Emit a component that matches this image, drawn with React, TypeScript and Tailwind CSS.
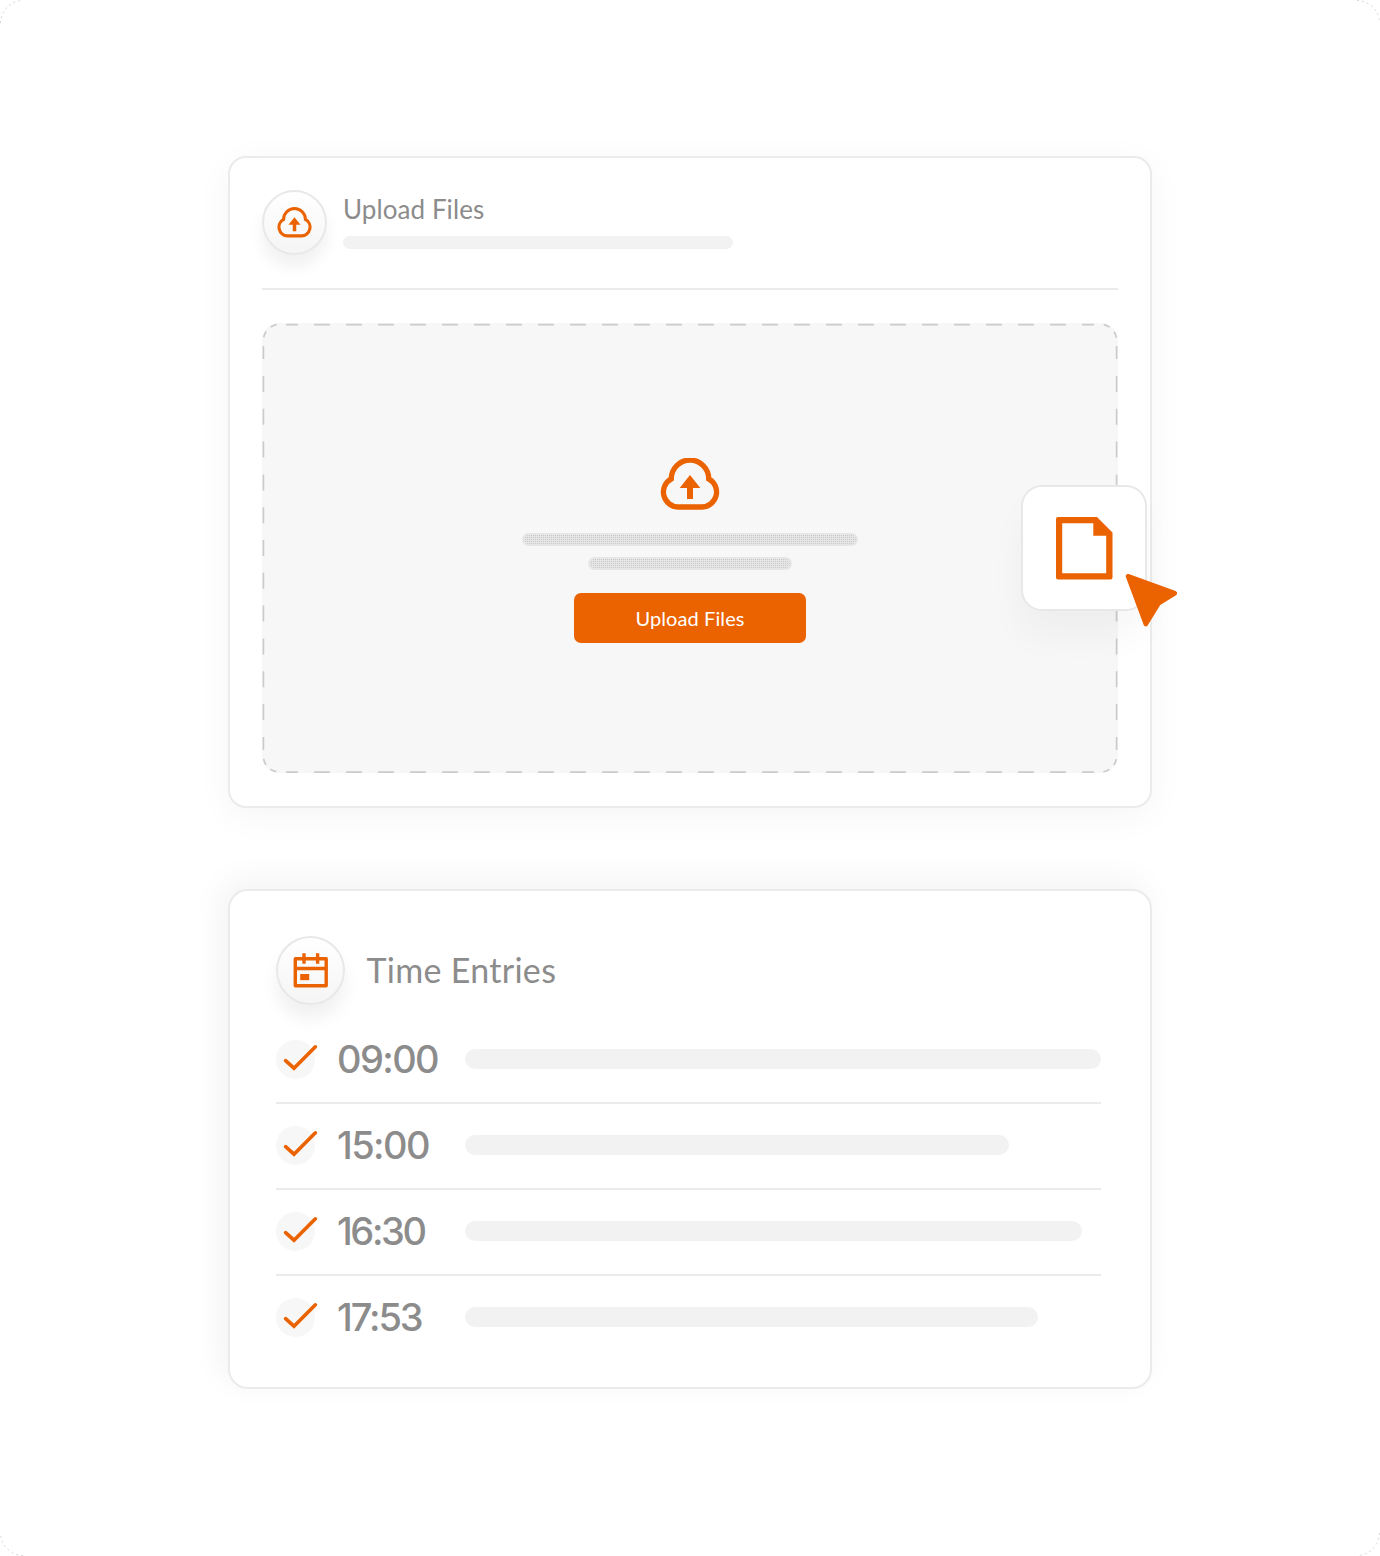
import React from "react";

const ORANGE = "#eb6200";

function CloudUpload({ className }: { className: string }) {
  return (
    <svg viewBox="0 0 60 52" className={className} fill="none">
      <path
        d="M18 49A15 15 0 0 1 11.3 20.8A18.7 18.7 0 0 1 48.7 20.8A15 15 0 0 1 42 49Z"
        stroke={ORANGE}
        strokeWidth="5.3"
      />
      <path d="M30 17L40.3 30H33V41H27V30H19.7Z" fill={ORANGE} />
    </svg>
  );
}

function CalendarIcon() {
  return (
    <svg viewBox="0 0 36 36" className="size-9" fill="none">
      <path d="M2.3 5.8H33.2V32.7H2.3Z" stroke={ORANGE} strokeWidth="3.4" strokeLinejoin="round" />
      <path d="M2 15.5H33M11 .2V10.8M24.6 .2V10.8" stroke={ORANGE} strokeWidth="3.4" />
      <path d="M7.2 21H16.2V27.2H7.2Z" fill={ORANGE} />
    </svg>
  );
}

function FileIcon() {
  return (
    <svg viewBox="0 0 57 63" className="h-[63px] w-[57px]">
      <path
        fillRule="evenodd"
        fill={ORANGE}
        d="M2 0H41L56.5 15.6V60.5Q56.5 62.5 54.5 62.5H2Q0 62.5 0 60.5V2Q0 0 2 0ZM6.2 6.2V56.2H50.2V18.8H37.3V6.2Z"
      />
    </svg>
  );
}

function CornerMark({ className }: { className: string }) {
  return (
    <svg viewBox="0 0 24 24" className={`absolute size-6 ${className}`} fill="none">
      <path d="M.5 23A23 23 0 0 1 23 .5" stroke="#d6d6d6" strokeWidth="1" strokeDasharray="2 3" />
    </svg>
  );
}

function DropZoneOutline() {
  const arc = { strokeDasharray: "0 3.2 6.3 6.3 6.3 4" };
  return (
    <svg viewBox="0 0 856 450" className="absolute inset-0 h-[450px] w-[856px]" fill="none" stroke="#cbcbcb" strokeWidth="1.7">
      {[1.6, 449.1].map((y) => (
        <g key={y}>
          <path d={`M52 ${y}H804`} strokeDasharray="16 16" />
          <path d={`M24 ${y}H36M820 ${y}H832`} />
        </g>
      ))}
      {[1.4, 854.6].map((x) => (
        <g key={x}>
          <path d={`M${x} 53V397`} strokeDasharray="16 16.8" />
          <path d={`M${x} 23V36M${x} 414V427`} />
        </g>
      ))}
      <path d="M1.4 17.4A16 16 0 0 1 17.4 1.4" {...arc} />
      <path d="M838.6 1.4A16 16 0 0 1 854.6 17.4" {...arc} />
      <path d="M854.6 433A16 16 0 0 1 838.6 449" {...arc} />
      <path d="M17.4 449A16 16 0 0 1 1.4 433" {...arc} />
    </svg>
  );
}

const entries = [
  { time: "09:00", bar: "w-[636px]", tracking: "tracking-[-1.6px]" },
  { time: "15:00", bar: "w-[543.5px]", tracking: "tracking-[-1.6px]" },
  { time: "16:30", bar: "w-[616.5px]", tracking: "tracking-[-2.4px]" },
  { time: "17:53", bar: "w-[573px]", tracking: "tracking-[-2.1px]" },
];

function UploadCard() {
  return (
    <section className="relative h-[652px] w-[924px] rounded-[18px] border-2 border-[#ebebeb] bg-white px-8 pt-8 shadow-[0_8px_36px_rgba(0,0,0,0.045)]">
      <header className="flex h-[100px] border-b-2 border-[#ebebeb]">
        <div className="flex size-[65px] items-center justify-center rounded-full border-2 border-[#e8e8e8] bg-linear-to-b from-white to-[#f5f5f5] pb-[1px] shadow-[0_12px_16px_rgba(0,0,0,0.06)]">
          <CloudUpload className="h-[31px] w-[35px]" />
        </div>
        <div className="ml-4 pt-[3px]">
          <h2 className="h-[43px] text-[26px] leading-8 tracking-[0.08px] whitespace-nowrap text-[#8c8c8c]">Upload Files</h2>
          <div className="h-[12.5px] w-[390px] rounded-full bg-[#f2f2f2]" />
        </div>
      </header>
      <div className="relative mt-[33px] flex h-[450px] w-[856px] flex-col items-center rounded-[17px] bg-[#f7f7f7] pt-[135px]">
        <DropZoneOutline />
        <CloudUpload className="h-[52px] w-[60px]" />
        <div className="mt-[23px] h-[13px] w-[336px] rounded-full border-2 border-[#e6e6e6] bg-[conic-gradient(#c8c8c8_25%,#e6e6e6_0)] bg-[length:2px_2px]" />
        <div className="mt-[11px] h-[13px] w-[204px] rounded-full border-2 border-[#e6e6e6] bg-[conic-gradient(#c8c8c8_25%,#e6e6e6_0)] bg-[length:2px_2px]" />
        <button className="mt-[23.4px] h-[50px] w-[232px] rounded-[7px] bg-[#eb6200] pb-[1px] text-[20px] tracking-[0.1px] text-white">
          Upload Files
        </button>
      </div>
      <div className="absolute top-[327px] left-[791px] flex size-[126px] items-center justify-center rounded-[21px] border-2 border-[#e8e8e8] bg-white shadow-[-2px_26px_34px_rgba(0,0,0,0.035)]">
        <FileIcon />
        <svg viewBox="0 0 54 56" className="absolute top-[85px] left-[101px] h-14 w-[54px]">
          <path
            d="M4 4.2L50.8 21.2L34.6 31.2L21.8 52Z"
            fill={ORANGE}
            stroke={ORANGE}
            strokeWidth="4.6"
            strokeLinejoin="round"
          />
        </svg>
      </div>
    </section>
  );
}

function TimeCard() {
  return (
    <section className="mt-[81px] h-[500px] w-[924px] rounded-[20px] border-2 border-[#ebebeb] bg-white pt-[45px] pl-[46px] shadow-[-6px_-8px_32px_rgba(0,0,0,0.055)]">
      <header className="flex h-[70px]">
        <div className="flex size-[69px] items-center justify-center rounded-full border-2 border-[#e8e8e8] bg-linear-to-b from-white to-[#f5f5f5] shadow-[0_14px_18px_rgba(0,0,0,0.06)]">
          <CalendarIcon />
        </div>
        <h2 className="mt-[14px] ml-[21.5px] text-[34px] leading-10 tracking-[0.3px] whitespace-nowrap text-[#8c8c8c]">Time Entries</h2>
      </header>
      <ul className="mt-3 w-[825px]">
        {entries.map((e) => (
          <li key={e.time} className="flex h-[86px] items-center border-b-2 border-[#ebebeb] pb-[2px] last:border-transparent">
            <div className="relative size-[39px] rounded-full bg-[#f7f7f7]">
              <svg viewBox="0 0 42 39" className="absolute top-0 left-0 h-[39px] w-[42px]" fill="none">
                <path d="M9.6 20.6L18 28.2L39.4 6.8" stroke={ORANGE} strokeWidth="3.6" strokeLinecap="round" />
              </svg>
            </div>
            <span
              className={`ml-[22px] w-32 shrink-0 font-['Inter',sans-serif] text-[38px] font-medium whitespace-nowrap text-[#8c8c8c] ${e.tracking}`}
            >
              {e.time}
            </span>
            <div className={`h-[19.5px] rounded-full bg-[#f2f2f2] ${e.bar}`} />
          </li>
        ))}
      </ul>
    </section>
  );
}

export default function App() {
  return (
    <main className="relative flex h-[1556px] w-[1380px] flex-col items-center overflow-hidden bg-white pt-[156px] font-['Lato','Inter',sans-serif]">
      <CornerMark className="top-0 left-0" />
      <CornerMark className="top-0 right-0 rotate-90" />
      <CornerMark className="right-0 bottom-0 rotate-180" />
      <CornerMark className="bottom-0 left-0 -rotate-90" />
      <UploadCard />
      <TimeCard />
    </main>
  );
}
